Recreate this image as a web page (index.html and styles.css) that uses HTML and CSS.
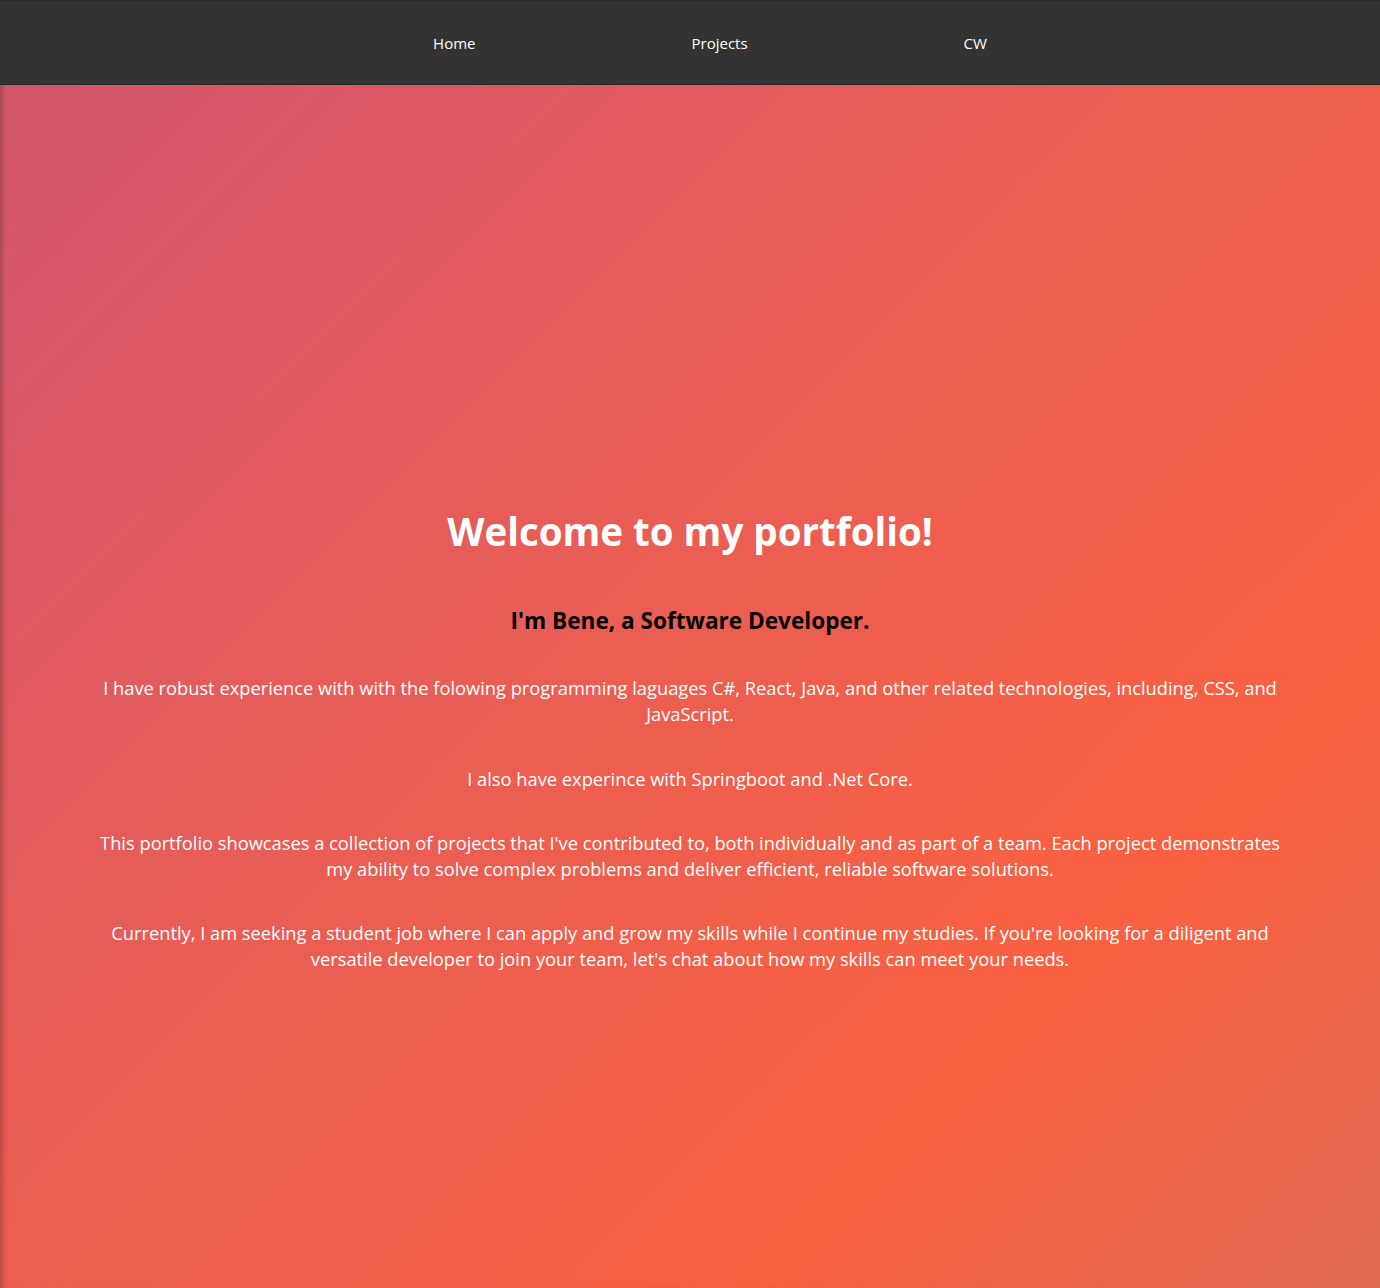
FILE: index.html
```html
<!DOCTYPE html>
<html lang="en">
<head>
<meta charset="utf-8">
<title>Portfolio</title>
<link rel="stylesheet" href="styles.css">
</head>
<body>
<nav class="topnav">
  <ul class="nav-list">
    <li class="nav-item"><a class="nav-link" href="#">Home</a></li>
    <li class="nav-item"><a class="nav-link" href="#">Projects</a></li>
    <li class="nav-item"><a class="nav-link" href="#">CW</a></li>
  </ul>
</nav>
<main class="hero">
  <div class="content">
    <h1 class="title">Welcome to my portfolio!</h1>
    <h2 class="subtitle">I'm Bene, a Software Developer.</h2>
    <p class="text">I have robust experience with with the folowing programming laguages C#, React, Java, and other related technologies, including, CSS, and JavaScript.</p>
    <p class="text">I also have experince with Springboot and .Net Core.</p>
    <p class="text">This portfolio showcases a collection of projects that I've contributed to, both individually and as part of a team. Each project demonstrates my ability to solve complex problems and deliver efficient, reliable software solutions.</p>
    <p class="text">Currently, I am seeking a student job where I can apply and grow my skills while I continue my studies. If you're looking for a diligent and versatile developer to join your team, let's chat about how my skills can meet your needs.</p>
  </div>
</main>
</body>
</html>
```
FILE: styles.css
```css
html, body {
  margin: 0;
  padding: 0;
}
body {
  font-family: "Open Sans", "Noto Sans", sans-serif;
  background: #e9604c;
}
.topnav {
  background: #333333;
  border-top: 1px solid #2a2a2a;
  border-bottom: 1px solid #262626;
  box-sizing: border-box;
  height: 85px;
  display: flex;
  align-items: center;
}
.nav-list {
  list-style: none;
  margin: 0;
  padding: 0 0 0 40px;
  width: 100%;
  box-sizing: border-box;
  display: flex;
  justify-content: center;
}
.nav-item {
  margin: 0 108px;
}
.nav-link {
  color: #ffffff;
  text-decoration: none;
  font-size: 15px;
}
.hero {
  min-height: 1203px;
  background: linear-gradient(135deg, #d3566e 0%, #e85d56 40%, #fa6140 76%, #e06c52 100%);
  box-shadow: inset 7px 0 6px -5px rgba(0, 0, 0, 0.25);
  display: flex;
  justify-content: center;
  box-sizing: border-box;
  padding-top: 420px;
}
.content {
  width: 1186px;
  text-align: center;
}
.title {
  margin: 0;
  font-size: 38.5px;
  font-weight: 700;
  color: #ffffff;
  line-height: 52px;
}
.subtitle {
  margin: 49px 0 0;
  font-size: 22.6px;
  font-weight: 700;
  color: #000000;
  line-height: 30px;
}
.text {
  margin: 38px 0 0;
  font-size: 18.3px;
  line-height: 26px;
  color: #ffffff;
}
.subtitle + .text {
  margin-top: 39px;
}
.text + .text {
  margin-top: 39px;
}
.text + .text + .text {
  margin-top: 38px;
}
```
